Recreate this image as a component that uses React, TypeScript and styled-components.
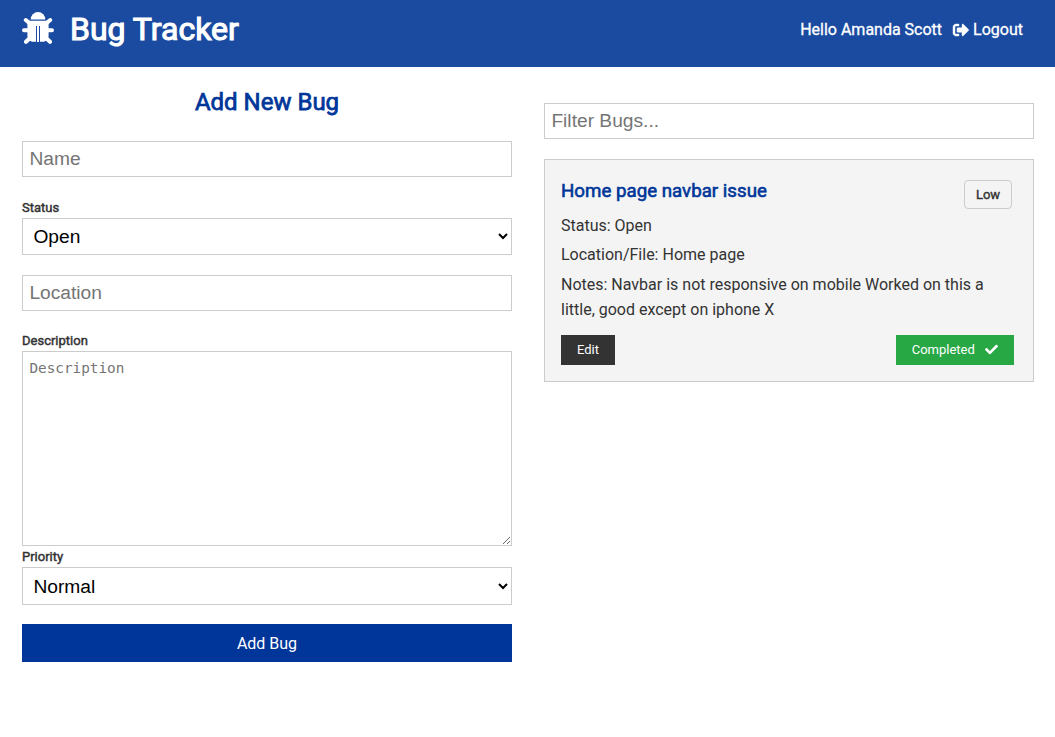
import React from 'react';
import styled, { createGlobalStyle, css } from 'styled-components';
import { FaCheck, FaSignOutAlt } from 'react-icons/fa';

const GlobalStyle = createGlobalStyle`
  * { box-sizing: border-box; margin: 0; padding: 0; }
  body {
    font-family: Roboto, 'Liberation Sans', sans-serif;
    font-size: 16px;
    line-height: 1.6;
    color: #333;
    background: #fff;
  }
`;

const thick = css<{ $stroke?: number }>`
  font-weight: 400;
  -webkit-text-stroke: ${(p) => p.$stroke ?? 0.6}px currentColor;
`;

const Navbar = styled.header`
  display: flex;
  justify-content: space-between;
  height: 67px;
  padding: 0 32px 0 22px;
  background: #1a4ba1;
  color: #fff;
`;

const Brand = styled.h1`
  ${thick}
  display: flex;
  align-items: center;
  gap: 16px;
  height: 58px;
  font-size: 32px;
  line-height: 58px;
`;

const BrandIcon = styled.svg`
  width: 32px;
  height: 32px;
  margin-bottom: 2px;
`;

const UserMenu = styled.div`
  ${thick}
  display: flex;
  align-items: center;
  height: 60px;
`;

const Logout = styled.a`
  display: flex;
  align-items: center;
  gap: 4px;
  margin-left: 11px;

  svg {
    margin-bottom: 1px;
    overflow: visible;
    stroke-width: 14px;
  }
`;

const Page = styled.main`
  display: grid;
  grid-template-columns: 490px 490px;
  column-gap: 32px;
  padding: 0 21px 0 22px;
`;

const Form = styled.form`
  display: flex;
  flex-direction: column;
  padding-top: 16px;
`;

const Title = styled.h2`
  ${thick}
  height: 38px;
  margin-bottom: 20px;
  font-size: 24px;
  line-height: 38px;
  color: #003699;
  text-align: center;
`;

const field = css`
  display: block;
  width: 100%;
  border: 1px solid #ccc;
  border-radius: 0;
  background: #fff;
  outline: none;
`;

const Input = styled.input`
  ${field}
  height: 36px;
  padding: 0 6.4px;
  font: 19.2px 'Liberation Sans', Arial, sans-serif;
  &::placeholder { color: #757575; }
`;

const Select = styled.select<{ $height: number }>`
  ${field}
  height: ${(p) => p.$height}px;
  padding: 0 1px 0 6.4px;
  font: 19.2px 'Liberation Sans', Arial, sans-serif;
  color: #000;
`;

const Label = styled.label<{ $top?: number; $stroke?: number }>`
  ${thick}
  height: 21px;
  margin-top: ${(p) => p.$top ?? 0}px;
  font-size: 13px;
  line-height: 21px;
`;

const Textarea = styled.textarea`
  ${field}
  height: 195px;
  padding: 7px 6.4px;
  font: 14.35px/19px 'DejaVu Sans Mono', monospace;
  resize: both;
  &::placeholder { color: #757575; }
`;

const Spacer = styled.div`
  height: 20px;
`;

const Submit = styled.button`
  height: 38px;
  margin-top: 19px;
  border: 0;
  background: #003699;
  color: #fff;
  font: 16px Roboto, sans-serif;
`;

const List = styled.section`
  padding-top: 36px;
`;

const Card = styled.article`
  height: 223px;
  margin-top: 20px;
  padding: 16px 19px 16px 16px;
  border: 1px solid #ccc;
  background: #f4f4f4;
`;

const CardTop = styled.div`
  display: flex;
  justify-content: space-between;
  height: 37px;
`;

const BugName = styled.h3`
  ${thick}
  font-size: 18.72px;
  line-height: 30px;
  color: #003699;
`;

const Badge = styled.span<{ $stroke?: number }>`
  ${thick}
  width: 48px;
  height: 29px;
  margin: 4px 2px 0 0;
  border: 1px solid #ccc;
  border-radius: 4px;
  font-size: 13px;
  line-height: 27px;
  text-align: center;
`;

const Detail = styled.p`
  margin-bottom: 4px;
  font-size: 16px;
  line-height: 25.4px;
`;

const Actions = styled.div`
  display: flex;
  justify-content: space-between;
  margin-top: 12px;
`;

const Action = styled.button<{ $color: string; $width: number }>`
  display: flex;
  align-items: center;
  justify-content: center;
  gap: 10.5px;
  width: ${(p) => p.$width}px;
  height: 30px;
  border: 0;
  background: ${(p) => p.$color};
  color: #fff;
  font: 13px Roboto, sans-serif;
`;

function BugIcon() {
  return (
    <BrandIcon viewBox="0 0 32 32" fill="currentColor">
      <path d="M8.7 7.4a7.3 7.4 0 0 1 14.6 0z" />
      <path d="M7 8.8h18L26.6 11v13q-.2 3.8-4.6 5.8h-4V14h-1v16h-2V14h-1v15.8h-4Q5.6 27.8 5.4 24V11z" />
      <path
        d="M3.8 8 8.5 12M28.2 8 23.5 12M2 18.2h28M4 29.8 9 25M28 29.8 23 25"
        fill="none"
        stroke="currentColor"
        strokeWidth="4"
        strokeLinecap="round"
        clipPath="url(#legs)"
      />
      <clipPath id="legs">
        <path d="M0 0h12v32H0zM20 0h12v32H20z" />
      </clipPath>
    </BrandIcon>
  );
}

export default function App() {
  return (
    <>
      <GlobalStyle />
      <Navbar>
        <Brand $stroke={1.1}><BugIcon />Bug Tracker</Brand>
        <UserMenu $stroke={0.3}>
          Hello Amanda Scott
          <Logout><FaSignOutAlt />Logout</Logout>
        </UserMenu>
      </Navbar>
      <Page>
        <Form>
          <Title $stroke={0.75}>Add New Bug</Title>
          <Input placeholder="Name" />
          <Label $top={20} $stroke={0.45}>Status</Label>
          <Select $height={37} defaultValue="Open">
            <option>Open</option>
            <option>Closed</option>
          </Select>
          <Spacer />
          <Input placeholder="Location" />
          <Label $top={19} $stroke={0.45}>Description</Label>
          <Textarea placeholder="Description" />
          <Label $stroke={0.45}>Priority</Label>
          <Select $height={38} defaultValue="Normal">
            <option>Low</option>
            <option>Normal</option>
            <option>High</option>
          </Select>
          <Submit type="button">Add Bug</Submit>
        </Form>
        <List>
          <Input placeholder="Filter Bugs..." />
          <Card>
            <CardTop>
              <BugName>Home page navbar issue</BugName>
              <Badge $stroke={0.4}>Low</Badge>
            </CardTop>
            <Detail>Status: Open</Detail>
            <Detail>Location/File: Home page</Detail>
            <Detail>Notes: Navbar is not responsive on mobile Worked on this a little, good except on iphone X</Detail>
            <Actions>
              <Action $color="#333" $width={54}>Edit</Action>
              <Action $color="#28a745" $width={118}>Completed<FaCheck size={13} /></Action>
            </Actions>
          </Card>
        </List>
      </Page>
    </>
  );
}
